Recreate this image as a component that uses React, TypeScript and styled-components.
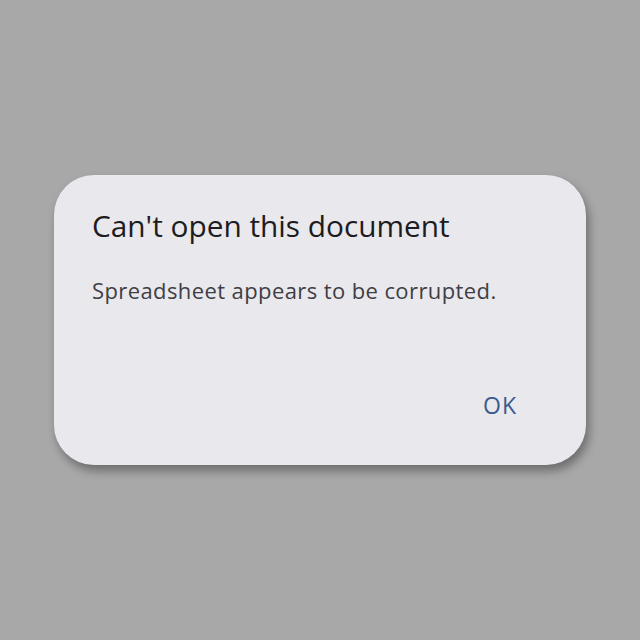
import styled, { createGlobalStyle } from "styled-components";

const GlobalStyle = createGlobalStyle`
  html, body {
    margin: 0;
    padding: 0;
  }
  body {
    background: #a8a8a9;
    font-family: "Open Sans", Roboto, sans-serif;
  }
`;

export default function App() {
  return (
    <>
      <GlobalStyle />
      <SC_Backdrop>
        <SC_Dialog role="alertdialog">
          <SC_Title>Can't open this document</SC_Title>
          <SC_Message>Spreadsheet appears to be corrupted.</SC_Message>
          <SC_Actions>
            <SC_TextButton>OK</SC_TextButton>
          </SC_Actions>
        </SC_Dialog>
      </SC_Backdrop>
    </>
  );
}

const SC_Backdrop = styled.div`
  height: 640px;
  display: flex;
  align-items: center;
  justify-content: center;
  background: #a8a8a9;
`;

const SC_Dialog = styled.div`
  width: 532px;
  height: 290px;
  box-sizing: border-box;
  padding: 31px 38px 0 38px;
  display: flex;
  flex-direction: column;
  background: #e9e8ed;
  border-radius: 40px;
  box-shadow: 3px 6px 10px rgba(0, 0, 0, 0.35);
`;

const SC_Title = styled.h2`
  margin: 0;
  font-size: 29.8px;
  line-height: 40px;
  font-weight: 400;
  color: #1d1c20;
`;

const SC_Message = styled.p`
  margin: 29px 0 0 0;
  font-size: 22px;
  line-height: 30px;
  letter-spacing: 0.4px;
  color: #3f3e44;
`;

const SC_Actions = styled.div`
  margin-top: 85px;
  display: flex;
  justify-content: flex-end;
`;

const SC_TextButton = styled.button`
  border: none;
  background: none;
  padding: 0 31px 0 16px;
  font-family: inherit;
  font-size: 23px;
  line-height: 30px;
  letter-spacing: 1px;
  font-weight: 400;
  color: #3a5a8f;
  cursor: pointer;
`;
